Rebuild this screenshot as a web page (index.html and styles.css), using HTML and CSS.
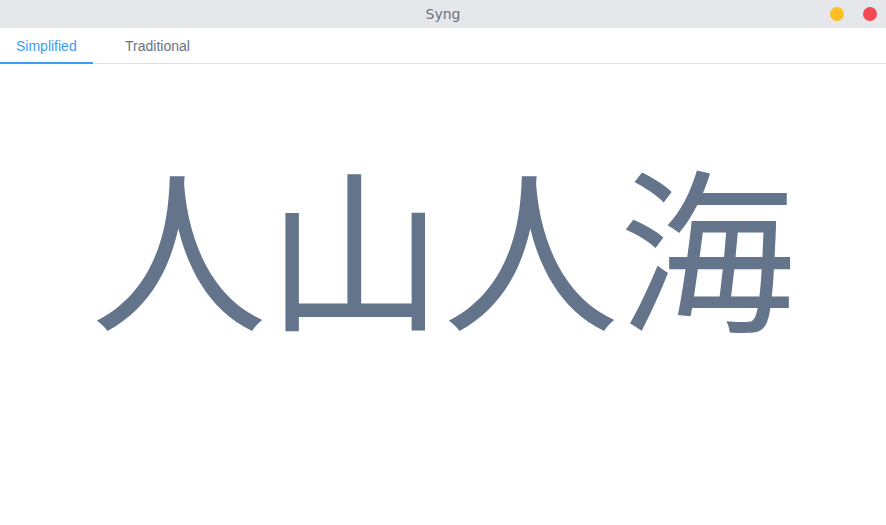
FILE: index.html
```html
<!DOCTYPE html>
<html>
<head>
<meta charset="utf-8">
<link rel="stylesheet" href="styles.css">
</head>
<body>
<div class="titlebar">
  <div class="title">Syng</div>
  <div class="controls">
    <span class="dot min"></span>
    <span class="dot close"></span>
  </div>
</div>
<div class="tabs">
  <div class="tab active">Simplified</div>
  <div class="tab">Traditional</div>
</div>
<main class="content">
  <div class="hanzi">人山人海&#xE0101;</div>
</main>
</body>
</html>
```

FILE: styles.css
```css
* { box-sizing: border-box; }
html, body { margin: 0; padding: 0; background: #fff; }
body { font-family: "Liberation Sans", Arial, sans-serif; width: 886px; height: 525px; overflow: hidden; }
.titlebar {
  height: 28px;
  background: #e6e7ea;
  display: flex;
  align-items: center;
  justify-content: center;
  position: relative;
}
.title { font-family: "DejaVu Sans", sans-serif; font-size: 14px; color: #6b7280; }
.controls {
  position: absolute;
  right: 9px;
  top: 7px;
  display: flex;
  gap: 19px;
}
.dot { width: 14px; height: 14px; border-radius: 50%; display: block; }
.dot.min { background: #fbbf24; }
.dot.close { background: #f14a55; }
.tabs {
  display: flex;
  height: 36px;
  border-bottom: 1px solid #dfe2e7;
}
.tab {
  font-size: 14px;
  color: #6b7280;
  padding: 10px 16px 0;
  height: 36px;
  margin-bottom: -1px;
}
.tab.active {
  color: #3b9cf5;
  border-bottom: 2px solid #3b9cf5;
  width: 93px;
}
.tab + .tab { padding-left: 32px; }
.content {
  display: flex;
  justify-content: center;
  padding-top: 91px;
}
.hanzi {
  font-family: "Noto Sans CJK JP", sans-serif;
  font-size: 176px;
  line-height: 1;
  color: #64748b;
}
```
